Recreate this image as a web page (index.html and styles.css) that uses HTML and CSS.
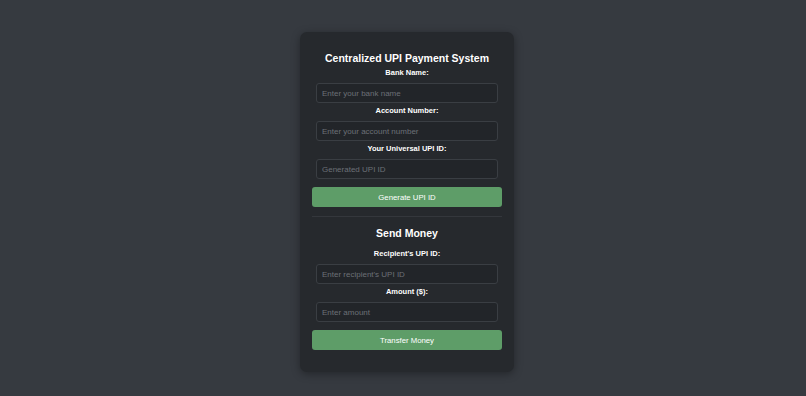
FILE: index.html
```html
<!DOCTYPE html>
<html lang="en">
<head>
    <meta charset="UTF-8">
    <meta name="viewport" content="width=device-width, initial-scale=1.0">
    <title>Centralized UPI Payment System</title>
    <link rel="stylesheet" href="styles.css">
</head>
<body>
    <div class="container">
        <h2>Centralized UPI Payment System</h2>
        <label for="bankName">Bank Name:</label>
        <input type="text" id="bankName" placeholder="Enter your bank name">
        <label for="accountNumber">Account Number:</label>
        <input type="text" id="accountNumber" placeholder="Enter your account number">
        <label for="upiId">Your Universal UPI ID:</label>
        <input type="text" id="upiId" placeholder="Generated UPI ID" readonly>
        <button onclick="generateUPI()">Generate UPI ID</button>

        <hr>

        <h3>Send Money</h3>
        <label for="recipientUPI">Recipient's UPI ID:</label>
        <input type="text" id="recipientUPI" placeholder="Enter recipient's UPI ID">
        <label for="amount">Amount ($):</label>
        <input type="number" id="amount" placeholder="Enter amount">
        <button onclick="transferMoney()">Transfer Money</button>
    </div>
</body>
</html>
```

FILE: styles.css
```css
* {
    margin: 0;
    padding: 0;
    box-sizing: border-box;
    font-family: "Liberation Sans", Arial, sans-serif;
}
body {
    display: flex;
    justify-content: center;
    align-items: flex-start;
    height: 100vh;
    padding-top: 32px;
    padding-left: 8px;
    background-color: #363a40;
    color: white;
}
.container {
    width: 214px;
    background: #26292d;
    border-radius: 7px;
    padding: 19px 12px 22px;
    display: flex;
    flex-direction: column;
    text-align: center;
    box-shadow: 0 2px 8px rgba(0, 0, 0, 0.35);
}
h2 {
    font-size: 10.5px;
    line-height: 14px;
}
h3 {
    font-size: 10.5px;
    line-height: 14px;
    margin-top: 9px;
    margin-bottom: 6px;
}
label {
    display: block;
    font-size: 7.5px;
    font-weight: bold;
    line-height: 10px;
    margin: 3px 0 5px;
}
input {
    height: 20px;
    margin: 0 4px;
    padding: 0 5px;
    font-size: 8px;
    background: #222529;
    border: 1px solid #3a3e43;
    border-radius: 3px;
    color: white;
    outline: none;
}
input::placeholder {
    color: #6c7077;
}
input[type=number]::-webkit-inner-spin-button {
    -webkit-appearance: none;
}
button {
    height: 20px;
    margin-top: 8px;
    background: #5e9d68;
    color: white;
    font-size: 7.75px;
    border: none;
    border-radius: 3px;
    cursor: pointer;
}
button:hover {
    background: #54905d;
}
hr {
    border: none;
    border-top: 1px solid #34373c;
    margin-top: 9px;
}
```
